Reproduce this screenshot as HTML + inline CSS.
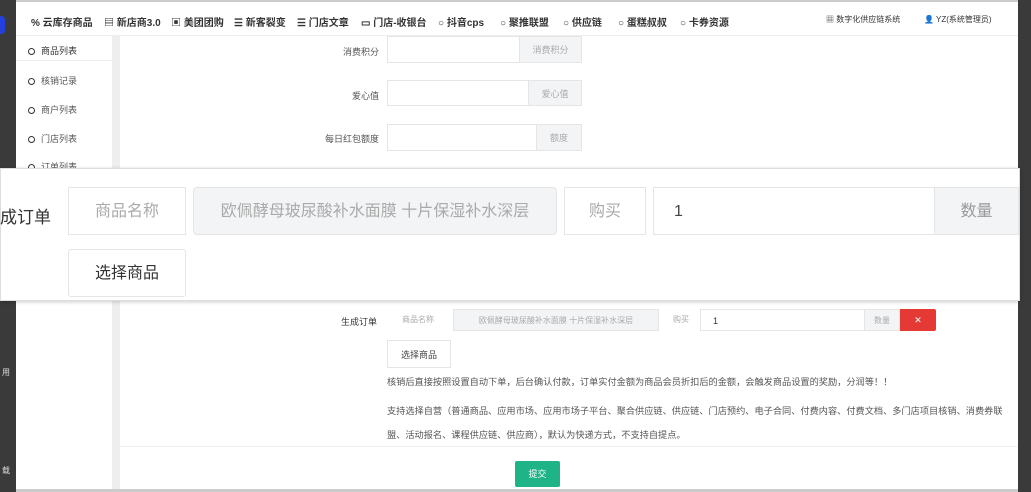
<!DOCTYPE html>
<html><head><meta charset="utf-8"><style>
*{margin:0;padding:0;box-sizing:border-box}
body{width:1031px;height:492px;overflow:hidden;background:#fff;font-family:"Liberation Sans","Noto Sans CJK SC",sans-serif;position:relative;color:#333}
.abs{position:absolute}
.nav span{position:absolute;top:12px;font-size:10px;color:#333;font-weight:bold;white-space:nowrap}
.side div{position:absolute;left:28px;font-size:9px;color:#555}
.side div:before{content:"";display:inline-block;width:5px;height:5px;border:1.5px solid #333;border-radius:50%;margin-right:6px;vertical-align:middle}
.lbl{font-size:9px;color:#555;text-align:right;width:80px}
.box{border:1px solid #e5e5e5;background:#fff}
.add{border:1px solid #e5e5e5;background:#f3f4f6;color:#aaa;font-size:9px;text-align:center}
.big{font-size:16px;color:#aaa;text-align:center}
.p{font-size:9.2px;color:#555;white-space:nowrap}
</style></head><body>
<div class="abs" style="left:0;top:0;width:16px;height:492px;background:#3a3a3a"></div>
<div class="abs" style="left:0;top:16px;width:5px;height:18px;background:#2240e0;border-radius:0 4px 4px 0"></div>
<div class="abs" style="left:2px;top:367px;font-size:8px;color:#ddd">用</div>
<div class="abs" style="left:2px;top:465px;font-size:8px;color:#ddd">载</div>
<div class="abs" style="left:1018px;top:0;width:13px;height:492px;background:#3a3a3a"></div>
<div class="abs" style="left:16px;top:0;width:1002px;height:2px;background:#ccc"></div>
<div class="abs nav" style="left:16px;top:2px;width:1002px;height:34px;background:#fff;border-bottom:1px solid #eee">
<span style="left:15px">% 云库存商品</span>
<span style="left:88px">▤ 新店商3.0</span>
<span style="left:155px">▣ 美团团购</span>
<span style="left:218px">☰ 新客裂变</span>
<span style="left:281px">☰ 门店文章</span>
<span style="left:345px">▭ 门店-收银台</span>
<span style="left:422px">○ 抖音cps</span>
<span style="left:484px">○ 聚推联盟</span>
<span style="left:547px">○ 供应链</span>
<span style="left:602px">○ 蛋糕叔叔</span>
<span style="left:664px">○ 卡券资源</span>
<span style="left:810px;font-weight:normal;font-size:8px">▦ 数字化供应链系统</span>
<span style="left:908px;font-weight:normal;font-size:8px">👤 YZ(系统管理员)</span>
</div>
<div class="abs side" style="left:16px;top:36px;width:96px;height:456px;background:#fff">
<div style="top:8px;left:12px;color:#333">商品列表</div>
<div style="top:38px;left:12px">核销记录</div>
<div style="top:67px;left:12px">商户列表</div>
<div style="top:96px;left:12px">门店列表</div>
<div style="top:124px;left:12px">订单列表</div>
</div>
<div class="abs" style="left:16px;top:60px;width:96px;height:1px;background:#eee"></div>
<div class="abs" style="left:112px;top:36px;width:8px;height:456px;background:#eee"></div>
<div class="abs lbl" style="left:299px;top:45px">消费积分</div>
<div class="abs box" style="left:387px;top:36px;width:133px;height:27px"></div>
<div class="abs add" style="left:519px;top:36px;width:63px;height:27px;line-height:27px">消费积分</div>
<div class="abs lbl" style="left:299px;top:89px">爱心值</div>
<div class="abs box" style="left:387px;top:80px;width:142px;height:26px"></div>
<div class="abs add" style="left:528px;top:80px;width:54px;height:26px;line-height:26px">爱心值</div>
<div class="abs lbl" style="left:299px;top:132px">每日红包额度</div>
<div class="abs box" style="left:387px;top:124px;width:150px;height:27px"></div>
<div class="abs add" style="left:536px;top:124px;width:46px;height:27px;line-height:27px">额度</div>
<!-- overlay -->
<div class="abs" style="left:0;top:168px;width:1020px;height:133px;background:#fff;border:1px solid #ddd;box-shadow:0 1px 4px rgba(0,0,0,.2)"></div>
<div class="abs" style="left:0;top:203px;font-size:17px;color:#333">成订单</div>
<div class="abs box big" style="left:68px;top:187px;width:118px;height:48px;line-height:48px">商品名称</div>
<div class="abs add" style="left:193px;top:187px;width:364px;height:48px;line-height:48px;font-size:16px;border-radius:4px;overflow:hidden;white-space:nowrap;color:#aaa">欧佩酵母玻尿酸补水面膜 十片保湿补水深层</div>
<div class="abs box big" style="left:564px;top:187px;width:82px;height:48px;line-height:48px">购买</div>
<div class="abs box" style="left:653px;top:187px;width:282px;height:48px;line-height:48px;font-size:16px;padding-left:20px;color:#444">1</div>
<div class="abs add" style="left:934px;top:187px;width:85px;height:48px;line-height:48px;font-size:16px;color:#999">数量</div>
<div class="abs box" style="left:68px;top:249px;width:118px;height:48px;line-height:48px;font-size:16px;text-align:center;color:#333;border-radius:3px">选择商品</div>
<!-- lower -->
<div class="abs" style="left:341px;top:315px;font-size:9px;color:#333">生成订单</div>
<div class="abs" style="left:386px;top:309px;width:64px;height:22px;line-height:22px;font-size:8px;color:#aaa;text-align:center">商品名称</div>
<div class="abs add" style="left:453px;top:309px;width:206px;height:22px;line-height:22px;font-size:8px">欧佩酵母玻尿酸补水面膜 十片保湿补水深层</div>
<div class="abs" style="left:662px;top:309px;width:38px;height:22px;line-height:22px;font-size:8px;color:#aaa;text-align:center">购买</div>
<div class="abs box" style="left:700px;top:309px;width:165px;height:22px;line-height:22px;font-size:9px;padding-left:12px">1</div>
<div class="abs add" style="left:864px;top:309px;width:36px;height:22px;line-height:22px;font-size:8px">数量</div>
<div class="abs" style="left:900px;top:309px;width:36px;height:22px;line-height:22px;background:#e53935;color:#fff;font-size:9px;text-align:center;border-radius:0 2px 2px 0">✕</div>
<div class="abs box" style="left:387px;top:340px;width:64px;height:28px;line-height:28px;font-size:9px;text-align:center;color:#444">选择商品</div>
<div class="abs p" style="left:387px;top:374px">核销后直接按照设置自动下单，后台确认付款，订单实付金额为商品会员折扣后的金额，会触发商品设置的奖励，分润等！！</div>
<div class="abs p" style="left:387px;top:403px">支持选择自营（普通商品、应用市场、应用市场子平台、聚合供应链、供应链、门店预约、电子合同、付费内容、付费文档、多门店项目核销、消费券联</div>
<div class="abs p" style="left:387px;top:427px">盟、活动报名、课程供应链、供应商），默认为快递方式，不支持自提点。</div>
<div class="abs" style="left:120px;top:446px;width:898px;height:1px;background:#f0f0f0"></div>
<div class="abs" style="left:515px;top:461px;width:45px;height:26px;line-height:26px;background:#1fb388;color:#fff;font-size:9px;text-align:center;border-radius:2px">提交</div>
<div class="abs" style="left:16px;top:489px;width:1002px;height:3px;background:#ccc"></div>
</body></html>
